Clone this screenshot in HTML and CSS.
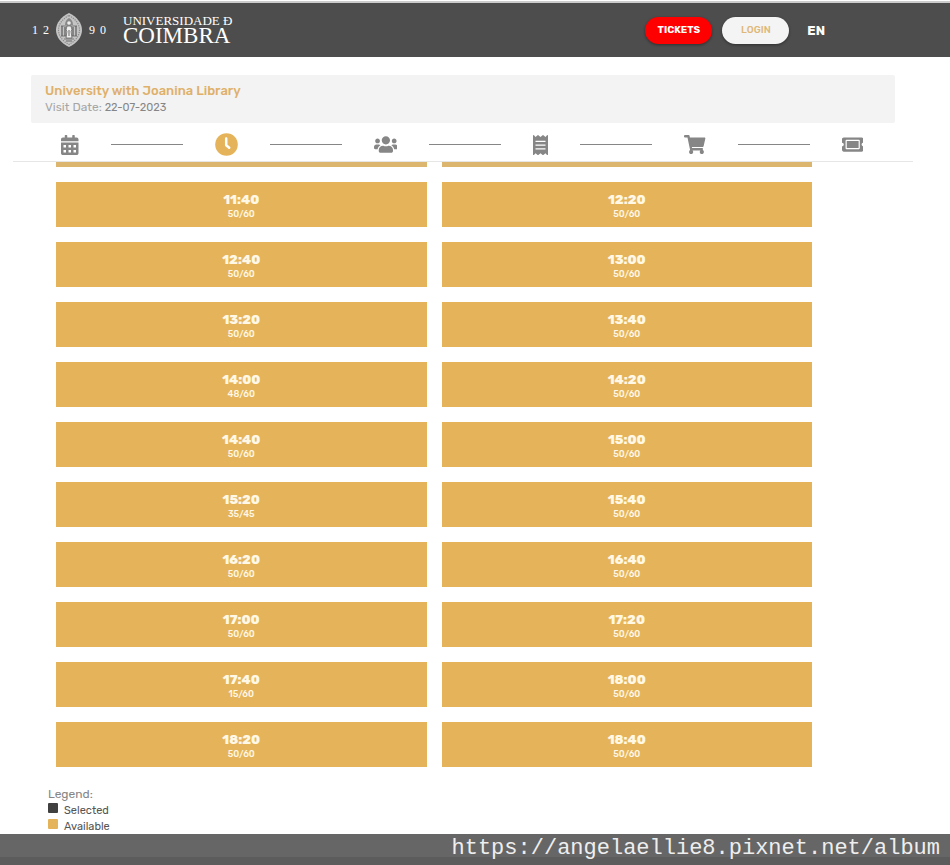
FILE: index.html
```html
<!DOCTYPE html>
<html lang="en">

<head>
    <meta charset="UTF-8">
    <meta name="viewport" content="width=device-width, initial-scale=1.0">
    <title>Universidade de Coimbra - Tickets</title>
    <link rel="stylesheet" href="styles.css">
</head>

<body>
    <header class="header">
        <div class="logo">
            <div class="year"><span>1</span><span>2</span></div>
            <svg class="seal" viewBox="0 0 26 34" aria-hidden="true">
                <path d="M13 0C21 4 26 10 26 17s-5 13-13 17C5 30 0 24 0 17S5 4 13 0z" fill="#c4c4c4" />
                <path d="M13 2.500C19.500 6 23.500 11 23.500 17S19.500 28 13 31.500C6.500 28 2.500 23 2.500 17S6.500 6 13 2.500z" fill="none" stroke="#8a8a8a" stroke-width="1.200" stroke-dasharray="1.300 1" />
                <path d="M5 13h16M5 23h16M8 26h10" stroke="#777" stroke-width="1" />
                <path d="M6 13v10M9 14v9M17 14v9M20 13v10" stroke="#5c5c5c" stroke-width="1.200" />
                <path d="M9 12c0-4 2-6 4-7 2 1 4 3 4 7z" fill="#888" />
                <circle cx="13" cy="10" r="1.800" fill="#eee" />
                <path d="M11 13h4l1 4-1 1 1 7h-6l1-7-1-1z" fill="#eee" stroke="#555" stroke-width=".7" />
                <path d="M13 17v6M10 28h6" stroke="#666" stroke-width="1" />
            </svg>
            <div class="year"><span>9</span><span>0</span></div>
            <div class="brand">
                <span class="brand-top">UNIVERSIDADE Đ</span>
                <span class="brand-name">COIMBRA</span>
            </div>
        </div>
        <nav class="menu">
            <button class="btn btn-tickets" type="button">TICKETS</button>
            <button class="btn btn-login" type="button">LOGIN</button>
            <a class="lang" href="#">EN</a>
        </nav>
    </header>

    <main class="container">
        <div class="info">
            <h1>University with Joanina Library</h1>
            <p>Visit Date: <span>22-07-2023</span></p>
        </div>

        <div class="steps">
            <svg class="icon" viewBox="0 0 448 512">
                <path fill-rule="evenodd" d="M0 464c0 26.500 21.500 48 48 48h352c26.500 0 48-21.500 48-48V192H0zM64 256h64v64H64zM192 256h64v64h-64zM320 256h64v64h-64zM64 384h64v64H64zM192 384h64v64h-64zM320 384h64v64h-64z" />
                <path d="M400 64h-48V16c0-8.800-7.200-16-16-16h-32c-8.800 0-16 7.200-16 16v48H160V16c0-8.800-7.200-16-16-16h-32c-8.800 0-16 7.200-16 16v48H48C21.500 64 0 85.500 0 112v48h448v-48c0-26.500-21.500-48-48-48z" />
            </svg>
            <span class="line"></span>
            <svg class="icon active" viewBox="0 0 23 23">
                <circle cx="11.500" cy="11.500" r="11.300" />
                <path class="hand" d="M11.200 5.500v6.800l3 2.400" />
            </svg>
            <span class="line"></span>
            <svg class="icon icon-small" viewBox="0 0 640 512">
                <path d="M96 224c35.300 0 64-28.700 64-64s-28.700-64-64-64-64 28.700-64 64 28.700 64 64 64zm448 0c35.300 0 64-28.700 64-64s-28.700-64-64-64-64 28.700-64 64 28.700 64 64 64zm32 32h-64c-17.600 0-33.500 7.100-45.100 18.600 40.300 22.100 68.900 62 75.100 109.400h66c17.700 0 32-14.300 32-32v-32c0-35.300-28.700-64-64-64zm-256 0c61.900 0 112-50.100 112-112S381.900 32 320 32 208 82.100 208 144s50.100 112 112 112zm76.800 32h-8.300c-20.800 10-43.900 16-68.500 16s-47.600-6-68.500-16h-8.300C179.600 288 128 339.600 128 403.200V432c0 26.500 21.500 48 48 48h288c26.500 0 48-21.500 48-48v-28.800c0-63.600-51.600-115.200-115.200-115.200zm-223.700-13.400C161.500 263.100 145.600 256 128 256H64c-35.300 0-64 28.700-64 64v32c0 17.700 14.300 32 32 32h65.900c6.300-47.400 34.900-87.300 75.200-109.400z" />
            </svg>
            <span class="line"></span>
            <svg class="icon" viewBox="0 0 384 512">
                <path fill-rule="evenodd" d="M358.400 3.200L320 48 265.600 3.200a15.900 15.900 0 0 0-19.200 0L192 48 137.600 3.200a15.900 15.900 0 0 0-19.200 0L64 48 25.600 3.200C15-4.700 0 2.800 0 16v480c0 13.200 15 20.700 25.600 12.800L64 464l54.400 44.800a15.900 15.900 0 0 0 19.200 0L192 464l54.400 44.800a15.900 15.900 0 0 0 19.200 0L320 464l38.400 44.800c10.500 7.900 25.600.4 25.600-12.800V16c0-13.200-15-20.700-25.600-12.800zM64 144h256v32H64zM64 240h256v32H64zM64 336h256v32H64z" />
            </svg>
            <span class="line"></span>
            <svg class="icon icon-small" viewBox="0 0 576 512">
                <path d="M528.120 301.319l47.273-208C578.806 78.301 567.391 64 551.990 64H159.208l-9.166-44.810C147.758 8.021 137.930 0 126.529 0H24C10.745 0 0 10.745 0 24v16c0 13.255 10.745 24 24 24h69.883l70.248 343.435C147.325 417.100 136 435.222 136 456c0 30.928 25.072 56 56 56s56-25.072 56-56c0-15.674-6.447-29.835-16.824-40h209.647C430.447 426.165 424 440.326 424 456c0 30.928 25.072 56 56 56s56-25.072 56-56c0-22.172-12.888-41.332-31.579-50.405l5.517-24.276c3.413-15.018-8.002-29.319-23.403-29.319H218.117l-6.545-32h293.145c11.206 0 20.920-7.754 23.403-18.681z" />
            </svg>
            <span class="line"></span>
            <svg class="icon icon-small" viewBox="0 0 576 512">
                <path d="M128 160h320v192H128V160zm400 96c0 26.510 21.490 48 48 48v96c0 26.510-21.490 48-48 48H48c-26.510 0-48-21.490-48-48v-96c26.510 0 48-21.490 48-48s-21.490-48-48-48v-96c0-26.510 21.490-48 48-48h480c26.510 0 48 21.490 48 48v96c-26.510 0-48 21.490-48 48zm-48-104c0-13.255-10.745-24-24-24H120c-13.255 0-24 10.745-24 24v208c0 13.255 10.745 24 24 24h336c13.255 0 24-10.745 24-24V152z" />
            </svg>
        </div>

        <div class="slots">
            <div class="slot-edge"></div>
            <div class="slot-edge"></div>
            <button class="slot" type="button"><b>11:40</b><small>50/60</small></button>
            <button class="slot" type="button"><b>12:20</b><small>50/60</small></button>
            <button class="slot" type="button"><b>12:40</b><small>50/60</small></button>
            <button class="slot" type="button"><b>13:00</b><small>50/60</small></button>
            <button class="slot" type="button"><b>13:20</b><small>50/60</small></button>
            <button class="slot" type="button"><b>13:40</b><small>50/60</small></button>
            <button class="slot" type="button"><b>14:00</b><small>48/60</small></button>
            <button class="slot" type="button"><b>14:20</b><small>50/60</small></button>
            <button class="slot" type="button"><b>14:40</b><small>50/60</small></button>
            <button class="slot" type="button"><b>15:00</b><small>50/60</small></button>
            <button class="slot" type="button"><b>15:20</b><small>35/45</small></button>
            <button class="slot" type="button"><b>15:40</b><small>50/60</small></button>
            <button class="slot" type="button"><b>16:20</b><small>50/60</small></button>
            <button class="slot" type="button"><b>16:40</b><small>50/60</small></button>
            <button class="slot" type="button"><b>17:00</b><small>50/60</small></button>
            <button class="slot" type="button"><b>17:20</b><small>50/60</small></button>
            <button class="slot" type="button"><b>17:40</b><small>15/60</small></button>
            <button class="slot" type="button"><b>18:00</b><small>50/60</small></button>
            <button class="slot" type="button"><b>18:20</b><small>50/60</small></button>
            <button class="slot" type="button"><b>18:40</b><small>50/60</small></button>
        </div>

        <div class="legend">
            <p>Legend:</p>
            <ul>
                <li><i class="box box-selected"></i>Selected</li>
                <li><i class="box box-available"></i>Available</li>
            </ul>
        </div>
    </main>

    <footer class="footer">https://angelaellie8.pixnet.net/album</footer>
</body>

</html>
```
FILE: styles.css
```css
:root {
    --gold: #e5b45a;
    --dark: #4d4d4d;
    --grey: #868686;
}

* {
    box-sizing: border-box;
}

body {
    margin: 0;
    min-height: 100vh;
    display: flex;
    flex-direction: column;
    background: #fff;
    font-family: Rubik, Roboto, sans-serif;
}

h1,
p,
ul {
    margin: 0;
    padding: 0;
}

/* header */
.header {
    display: flex;
    justify-content: space-between;
    align-items: center;
    height: 56px;
    margin-top: 1px;
    padding: 0 125px 0 32px;
    border-top: 2px solid #ccc;
    background: var(--dark);
    color: #fff;
}

.logo {
    display: flex;
    align-items: center;
    gap: 7px;
    font-family: "Liberation Serif", serif;
}

.year {
    display: flex;
    gap: 5px;
    font-size: 12px;
}

.seal {
    width: 26px;
    height: 34px;
}

.brand {
    display: flex;
    flex-direction: column;
    margin-left: 10px;
    padding-bottom: 2px;
}

.brand-top {
    font-size: 13px;
    line-height: 12px;
}

.brand-name {
    font-size: 23px;
    line-height: 17px;
}

.menu {
    display: flex;
    align-items: center;
    gap: 10px;
}

.btn {
    width: 67px;
    height: 27px;
    padding: 0;
    border: none;
    border-radius: 14px;
    font-family: inherit;
    font-size: 10px;
    font-weight: 700;
    cursor: pointer;
    box-shadow: 0 1px 3px rgba(0, 0, 0, 0.4);
}

.btn-tickets {
    background: #f00;
    color: #fff;
}

.btn-login {
    background: #f4f4f4;
    color: #dfb878;
    font-weight: 500;
}

.lang {
    margin-left: 8px;
    color: #fff;
    font-size: 13px;
    font-weight: 700;
    text-decoration: none;
}

/* content */
.container {
    flex: 1;
    margin: 18px 37px 0 13px;
}

.info {
    height: 48px;
    margin: 0 18px;
    padding: 7px 14px;
    border-radius: 2px;
    background: #f3f3f3;
}

.info h1 {
    color: #dfb06a;
    font-size: 13px;
    font-weight: 500;
    line-height: 17px;
}

.info p {
    color: #a6a6a6;
    font-size: 12px;
    line-height: 17px;
}

.info span {
    color: var(--grey);
    font-size: 11px;
}

.steps {
    display: flex;
    justify-content: center;
    align-items: center;
    gap: 32px;
    height: 39px;
    padding: 5px 2px 0 0;
    border-bottom: 1px solid #e6e6e6;
}

.icon {
    height: 20px;
    fill: var(--grey);
}

.icon-small {
    height: 19px;
}

.active {
    height: 23px;
    fill: var(--gold);
}

.hand {
    fill: none;
    stroke: #fff;
    stroke-width: 2.5;
    stroke-linecap: round;
    stroke-linejoin: round;
}

.line {
    flex: 0 1 72px;
    height: 1px;
    background: var(--grey);
}

.slots {
    display: grid;
    grid-template-columns: 1fr 1fr;
    gap: 15px;
    padding: 0 101px 0 43px;
}

.slot-edge {
    height: 5px;
    background: #dcb66e;
}

.slot {
    display: flex;
    flex-direction: column;
    justify-content: center;
    align-items: center;
    height: 45px;
    padding: 4px 0 0;
    border: none;
    background: var(--gold);
    color: #fff8e6;
    font-family: inherit;
    cursor: pointer;
}

.slot b {
    font-size: 13px;
    font-weight: 800;
    line-height: 15px;
}

.slot small {
    font-size: 9px;
    font-weight: 500;
    line-height: 14px;
}

.legend {
    padding: 20px 35px 0;
    color: #555;
    font-size: 11px;
}

.legend p {
    color: var(--grey);
    font-size: 12px;
    line-height: 15px;
}

.legend ul {
    list-style: none;
}

.legend li {
    display: flex;
    gap: 6px;
    padding-top: 1px;
    line-height: 15px;
}

.box {
    width: 10px;
    height: 10px;
    border-radius: 1px;
}

.box-selected {
    background: #404040;
}

.box-available {
    background: var(--gold);
}

/* footer */
.footer {
    height: 31px;
    padding-right: 10px;
    background: linear-gradient(#666 75%, #5c5c5c 75%);
    color: #eee;
    font-family: "Liberation Mono", monospace;
    font-size: 22px;
    line-height: 29px;
    text-align: right;
}
```
